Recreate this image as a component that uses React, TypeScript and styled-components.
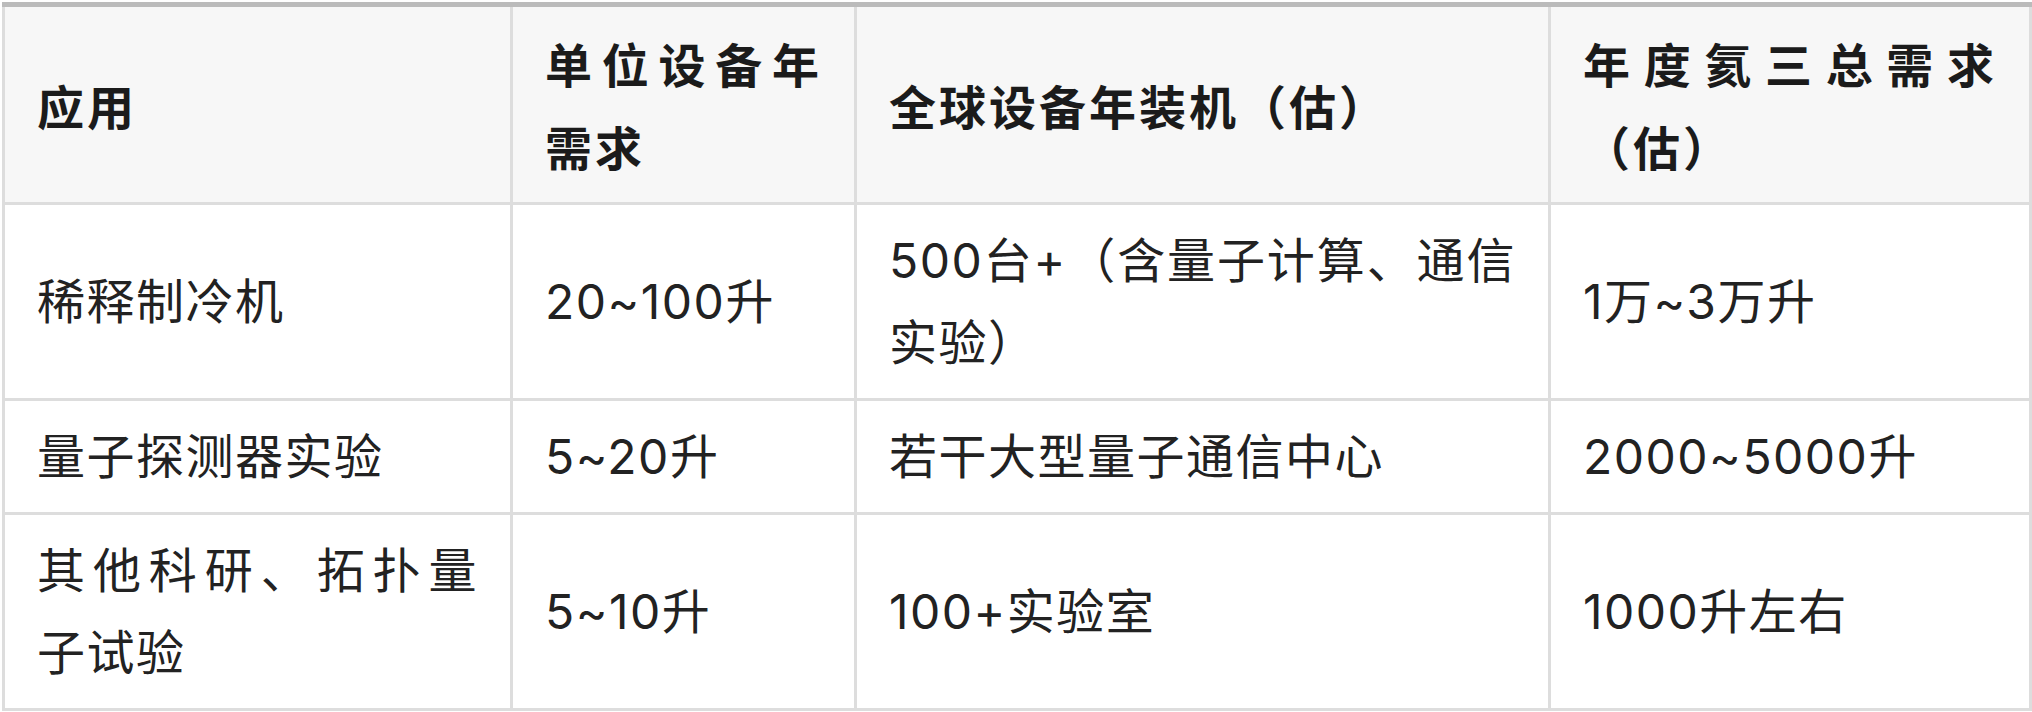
import React from 'react';
import styled, { createGlobalStyle } from 'styled-components';

const GlobalStyle = createGlobalStyle`
  html, body {
    margin: 0;
    padding: 0;
    background: #fff;
  }
  body {
    font-family: Inter, "Noto Sans CJK SC", sans-serif;
    color: #222;
  }
`;

const Page = styled.div`
  padding: 2px 0 1px 2px;
`;

const Table = styled.div`
  display: grid;
  grid-template-columns: 505px 341px 691px 478px;
  gap: 3px;
  background: #dddddd;
  border-top: 5px solid #bbbbbb;
  padding: 0 3px 3px 3px;
  width: 2030px;
  box-sizing: border-box;
`;

const Cell = styled.div<{ $head?: boolean }>`
  display: flex;
  flex-direction: column;
  justify-content: center;
  box-sizing: border-box;
  padding: ${p => (p.$head ? '14px 32px 15px' : '15px 32px 14px')};
  background: ${p => (p.$head ? '#f7f7f7' : '#ffffff')};
  color: ${p => (p.$head ? '#1b1b1b' : '#222222')};
  font-family: ${p =>
    p.$head ? '"Noto Sans CJK SC", sans-serif' : 'Inter, "Noto Sans CJK SC", sans-serif'};
  font-size: ${p => (p.$head ? '47px' : '48px')};
  font-weight: ${p => (p.$head ? 700 : 400)};
  letter-spacing: ${p => (p.$head ? '3px' : '1.5px')};
  line-height: ${p => (p.$head ? '83px' : '82px')};
  text-align: justify;
`;

const headers = ['应用', '单位设备年需求', '全球设备年装机（估）', '年度氦三总需求（估）'];

const rows: string[][] = [
  ['稀释制冷机', '20~100升', '500台+（含量子计算、通信实验）', '1万~3万升'],
  ['量子探测器实验', '5~20升', '若干大型量子通信中心', '2000~5000升'],
  ['其他科研、拓扑量子试验', '5~10升', '100+实验室', '1000升左右'],
];

export default function App() {
  return (
    <Page>
      <GlobalStyle />
      <Table>
        {headers.map(h => (
          <Cell key={h} $head>
            {h}
          </Cell>
        ))}
        {rows.map((row, i) =>
          row.map((text, j) => <Cell key={`${i}-${j}`}>{text}</Cell>)
        )}
      </Table>
    </Page>
  );
}
